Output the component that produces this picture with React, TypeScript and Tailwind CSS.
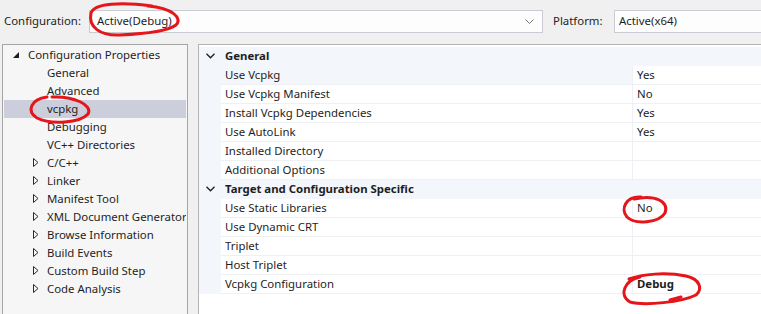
import React from 'react';

type TreeItem = { label: string; level: 0 | 1; expander?: 'open' | 'closed'; selected?: boolean };

const TREE: TreeItem[] = [
  { label: 'Configuration Properties', level: 0, expander: 'open' },
  { label: 'General', level: 1 },
  { label: 'Advanced', level: 1 },
  { label: 'vcpkg', level: 1, selected: true },
  { label: 'Debugging', level: 1 },
  { label: 'VC++ Directories', level: 1 },
  { label: 'C/C++', level: 1, expander: 'closed' },
  { label: 'Linker', level: 1, expander: 'closed' },
  { label: 'Manifest Tool', level: 1, expander: 'closed' },
  { label: 'XML Document Generator', level: 1, expander: 'closed' },
  { label: 'Browse Information', level: 1, expander: 'closed' },
  { label: 'Build Events', level: 1, expander: 'closed' },
  { label: 'Custom Build Step', level: 1, expander: 'closed' },
  { label: 'Code Analysis', level: 1, expander: 'closed' },
];

type GridRow = { kind: 'cat'; label: string } | { kind: 'prop'; name: string; value?: string; bold?: boolean; focus?: boolean };

const GRID: GridRow[] = [
  { kind: 'cat', label: 'General' },
  { kind: 'prop', name: 'Use Vcpkg', value: 'Yes', focus: true },
  { kind: 'prop', name: 'Use Vcpkg Manifest', value: 'No' },
  { kind: 'prop', name: 'Install Vcpkg Dependencies', value: 'Yes' },
  { kind: 'prop', name: 'Use AutoLink', value: 'Yes' },
  { kind: 'prop', name: 'Installed Directory' },
  { kind: 'prop', name: 'Additional Options' },
  { kind: 'cat', label: 'Target and Configuration Specific' },
  { kind: 'prop', name: 'Use Static Libraries', value: 'No' },
  { kind: 'prop', name: 'Use Dynamic CRT' },
  { kind: 'prop', name: 'Triplet' },
  { kind: 'prop', name: 'Host Triplet' },
  { kind: 'prop', name: 'Vcpkg Configuration', value: 'Debug', bold: true },
];

function OpenArrow() {
  return (
    <svg width="6" height="6" viewBox="0 0 6 6" className="shrink-0">
      <polygon points="6,0 6,6 0,6" fill="#1e1e1e" />
    </svg>
  );
}

function ClosedArrow() {
  return (
    <svg width="6" height="9" viewBox="0 0 6 9" className="shrink-0">
      <polygon points="0.5,0.5 5,4.5 0.5,8.5" fill="none" stroke="#2a2a2a" strokeWidth="1" />
    </svg>
  );
}

function CatChevron() {
  return (
    <svg width="9" height="6" viewBox="0 0 9 6">
      <polyline points="0.5,0.8 4.5,4.8 8.5,0.8" fill="none" stroke="#1e1e1e" strokeWidth="1.3" />
    </svg>
  );
}

function Annotations() {
  return (
    <svg className="absolute inset-0 pointer-events-none" width="761" height="314" viewBox="0 0 761 314">
      <g fill="none" stroke="#e4151b" strokeWidth="3" strokeLinecap="round" strokeLinejoin="round">
        <path d="M152 6 C122 2 94 3 91 13 C88 27 100 36 120 35 C142 34 168 31 176 25 C183 18 172 8 148 6" />
        <path d="M47 97 C31 99 26 111 37 118 C51 125 80 123 88 114 C93 105 74 96 52 97" />
        <path d="M641 197 C626 196 620 209 627 217 C635 225 659 223 665 213 C669 202 656 194 634 199" />
        <path d="M640 277 C625 280 618 295 630 302 C645 306 682 302 696 295 C703 289 700 279 686 276 C666 272 642 274 629 279" />
        <path d="M670 300 L681 297" />
      </g>
    </svg>
  );
}

export default function App() {
  return (
    <div
      className="relative w-[761px] h-[314px] overflow-hidden bg-[#f0f0f0] text-[11.4px] text-[#1e1e1e] leading-none"
      style={{ fontFamily: '"Noto Sans", "Noto Sans CJK KR", sans-serif' }}
    >
      {/* toolbar */}
      <div className="flex items-center h-[44px] pl-[4px] pb-[2px]">
        <span className="w-[85px] shrink-0">Configuration:</span>
        <div className="flex items-center shrink-0 w-[454px] h-[23px] border border-[#c9ccd3] bg-[#fdfdfd] pl-[7px] pr-[8px]">
          <span className="flex-1">Active(Debug)</span>
          <svg width="9" height="5" viewBox="0 0 9 5">
            <polyline points="0.5,0.5 4.5,4.5 8.5,0.5" fill="none" stroke="#707070" strokeWidth="1" />
          </svg>
        </div>
        <span className="ml-[10px] w-[61px] shrink-0">Platform:</span>
        <div className="flex items-center shrink-0 w-[200px] h-[23px] border border-[#c9ccd3] bg-[#fdfdfd] pl-[4px]">
          <span>Active(x64)</span>
        </div>
      </div>

      <div className="flex h-[270px]">
        {/* tree */}
        <div className="ml-[2px] w-[186px] shrink-0 overflow-hidden border-t border-l border-r border-[#a5a5a5] bg-[#f6f6f6] pt-[1px]">
          {TREE.map((t) => (
            <div
              key={t.label}
              className={`flex items-center h-[18px] mx-[1px] pb-[1px] whitespace-nowrap overflow-hidden ${t.selected ? 'bg-[#cccedb]' : ''}`}
            >
              {t.level === 0 ? (
                <>
                  <span className="w-[9px] shrink-0" />
                  <OpenArrow />
                  <span className="ml-[9px] shrink-0">{t.label}</span>
                </>
              ) : (
                <>
                  <span className="w-[29px] shrink-0" />
                  <span className="w-[6px] shrink-0 flex items-center">{t.expander === 'closed' && <ClosedArrow />}</span>
                  <span className="ml-[8px] shrink-0">{t.label}</span>
                </>
              )}
            </div>
          ))}
        </div>

        {/* property grid */}
        <div className="ml-[10px] flex-1 border-t border-l border-[#b4b4b4] bg-white pt-[2px]">
          {GRID.map((r, i) =>
            r.kind === 'cat' ? (
              <div key={i} className="flex items-center h-[19px] pb-[1px] bg-[#f3f6fb] font-bold">
                <span className="w-[22px] flex justify-center pl-[1px]">
                  <CatChevron />
                </span>
                <span className="pl-[4px]">{r.label}</span>
              </div>
            ) : (
              <div key={i} className="flex h-[19px]">
                <span className="w-[22px] shrink-0 bg-[#f3f6fb]" />
                <div className="flex flex-1 border-b border-[#eef0f4]">
                  <span className={`w-[411px] shrink-0 flex items-center pl-[4px] ${r.focus ? 'bg-[#f3f6fb]' : ''}`}>{r.name}</span>
                  <span className={`flex-1 flex items-center pl-[4px] border-l border-[#eef0f4] ${r.bold ? 'font-bold' : ''}`}>
                    {r.value}
                  </span>
                </div>
              </div>
            )
          )}
        </div>
      </div>

      <Annotations />
    </div>
  );
}
